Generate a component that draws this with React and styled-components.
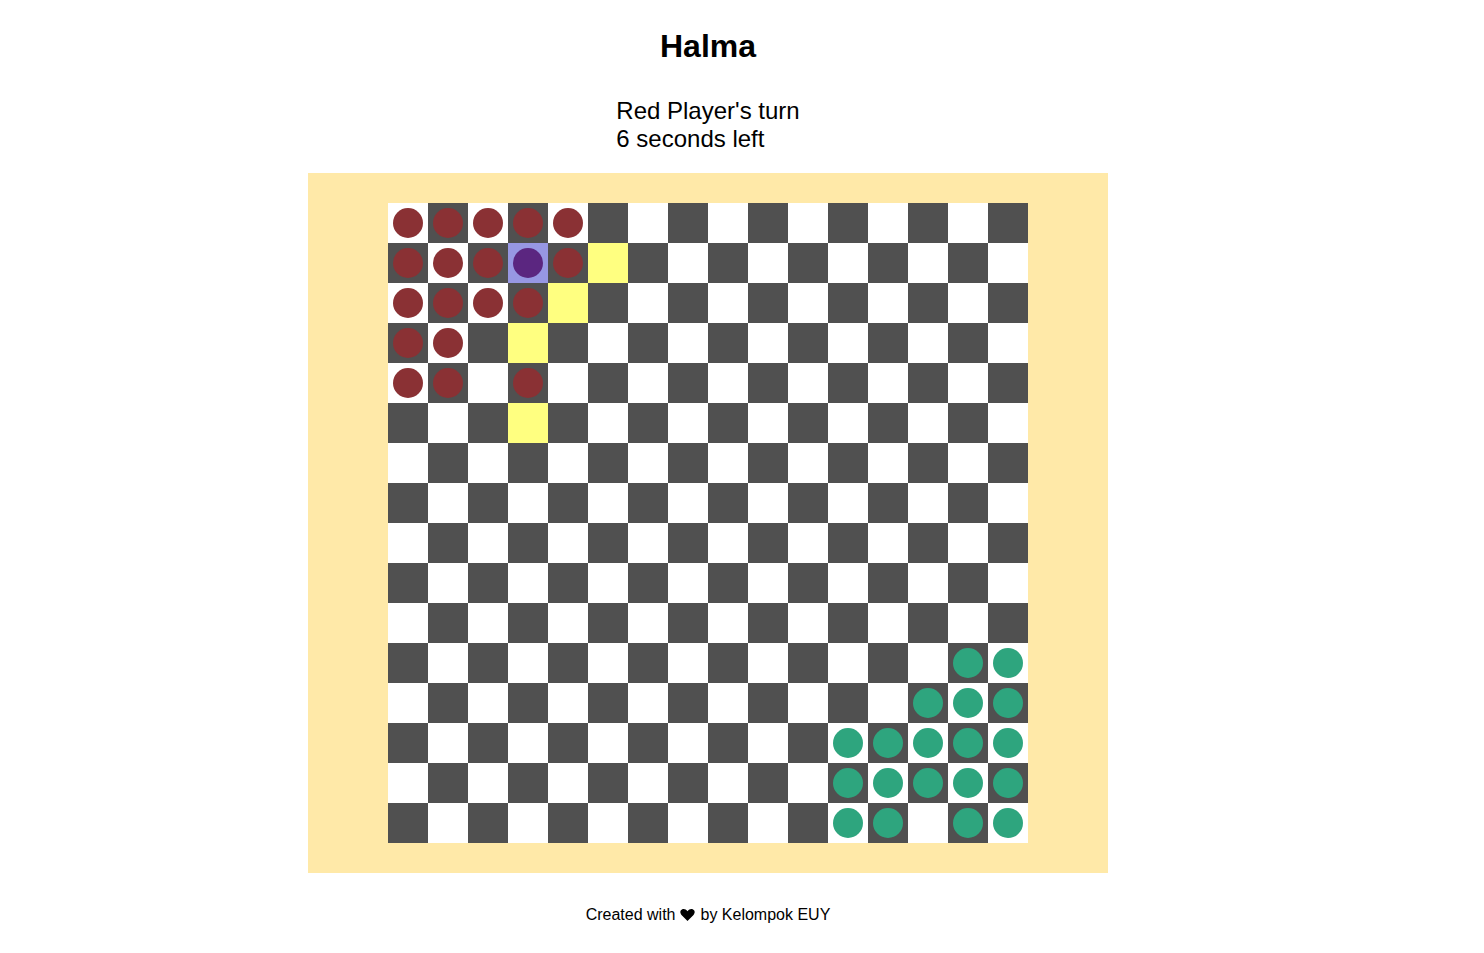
import React from "react";
import styled, { createGlobalStyle } from "styled-components";

const GlobalStyle = createGlobalStyle`
  body {
    margin: 8px;
    background: #ffffff;
    font-family: "Liberation Sans", Arial, sans-serif;
    color: #000;
  }
`;

const Page = styled.div`
  width: 1400px;
  display: flex;
  flex-direction: column;
  align-items: center;
`;

const Title = styled.h1`
  font-size: 32px;
  font-weight: bold;
  margin: 20px 0 0;
  line-height: 37px;
`;

const Status = styled.div`
  margin-top: 32px;
  font-size: 24px;
  line-height: 28px;
  text-align: left;
`;

const BoardFrame = styled.div`
  margin-top: 20px;
  width: 800px;
  height: 700px;
  background: #ffe9a8;
  display: flex;
  align-items: center;
  justify-content: center;
`;

const Grid = styled.div`
  display: grid;
  grid-template-columns: repeat(16, 40px);
  grid-template-rows: repeat(16, 40px);
`;

const cellBg = ({ $dark, $hint, $selected }) => {
  if ($selected) return "#9797e3";
  if ($hint) return "#ffff80";
  return $dark ? "#505050" : "#ffffff";
};

const Cell = styled.div`
  width: 40px;
  height: 40px;
  background: ${cellBg};
  display: flex;
  align-items: center;
  justify-content: center;
`;

const pieceColors = {
  red: "#8a3134",
  green: "#2ea57e",
  purple: "#5b2680",
};

const Piece = styled.div`
  width: 30px;
  height: 30px;
  border-radius: 50%;
  background: ${({ $color }) => pieceColors[$color]};
`;

const Footer = styled.footer`
  margin-top: 33px;
  font-size: 16px;
  line-height: 18px;
  display: flex;
  align-items: center;
  gap: 5px;
`;

const Heart = () => (
  <svg width="15" height="12" viewBox="0 0 30 25" aria-hidden="true">
    <path
      d="M15 25 L3 13 C-1 9 -1 3 3.5 1 C7.5 -1 11.5 0.5 15 4.5 C18.5 0.5 22.5 -1 26.5 1 C31 3 31 9 27 13 Z"
      fill="#000"
    />
  </svg>
);

const redPieces = [
  [0, 0], [0, 1], [0, 2], [0, 3], [0, 4],
  [1, 0], [1, 1], [1, 2], [1, 4],
  [2, 0], [2, 1], [2, 2], [2, 3],
  [3, 0], [3, 1],
  [4, 0], [4, 1], [4, 3],
];
const greenPieces = [
  [11, 14], [11, 15],
  [12, 13], [12, 14], [12, 15],
  [13, 11], [13, 12], [13, 13], [13, 14], [13, 15],
  [14, 11], [14, 12], [14, 13], [14, 14], [14, 15],
  [15, 11], [15, 12], [15, 14], [15, 15],
];
const hints = [[1, 5], [2, 4], [3, 3], [5, 3]];
const selected = [1, 3];

const has = (list, r, c) => list.some(([a, b]) => a === r && b === c);

export default function App() {
  const cells = [];
  for (let r = 0; r < 16; r++) {
    for (let c = 0; c < 16; c++) {
      const isSel = selected[0] === r && selected[1] === c;
      let piece = null;
      if (isSel) piece = "purple";
      else if (has(redPieces, r, c)) piece = "red";
      else if (has(greenPieces, r, c)) piece = "green";
      cells.push(
        <Cell
          key={`${r}-${c}`}
          $dark={(r + c) % 2 === 1}
          $hint={has(hints, r, c)}
          $selected={isSel}
        >
          {piece && <Piece $color={piece} />}
        </Cell>
      );
    }
  }
  return (
    <>
      <GlobalStyle />
      <Page>
        <Title>Halma</Title>
        <Status>
          Red Player's turn
          <br />
          6 seconds left
        </Status>
        <BoardFrame>
          <Grid>{cells}</Grid>
        </BoardFrame>
        <Footer>
          <span>Created with</span>
          <Heart />
          <span>by Kelompok EUY</span>
        </Footer>
      </Page>
    </>
  );
}
